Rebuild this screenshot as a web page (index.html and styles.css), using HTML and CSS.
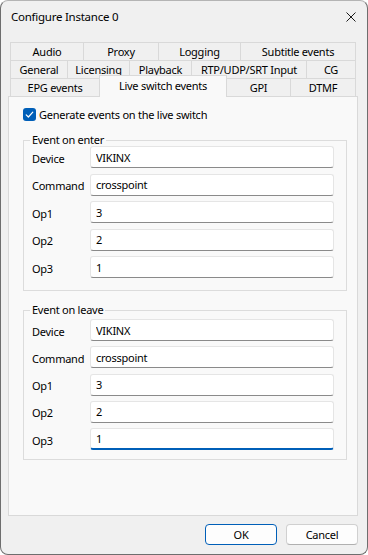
FILE: index.html
```html
<!DOCTYPE html>
<html lang="en">
<head>
  <meta charset="UTF-8" />
  <title>Configure Instance 0</title>
  <link rel="stylesheet" href="styles.css">
</head>
<body>
  <div class="window">
    <div class="titlebar">
      <span class="title">Configure Instance 0</span>
      <svg class="close" width="10" height="10" viewBox="0 0 10 10">
        <path d="M0.5 0.5 L9.5 9.5 M9.5 0.5 L0.5 9.5" stroke="#1a1a1a" stroke-width="1" fill="none" />
      </svg>
    </div>

    <div class="tabs">
      <div class="tab-row row-1">
        <div class="tab">Audio</div>
        <div class="tab">Proxy</div>
        <div class="tab">Logging</div>
        <div class="tab">Subtitle events</div>
      </div>
      <div class="tab-row row-2">
        <div class="tab">General</div>
        <div class="tab">Licensing</div>
        <div class="tab">Playback</div>
        <div class="tab">RTP/UDP/SRT Input</div>
        <div class="tab">CG</div>
      </div>
      <div class="tab-row row-3">
        <div class="tab">EPG events</div>
        <div class="tab active">Live switch events</div>
        <div class="tab">GPI</div>
        <div class="tab">DTMF</div>
      </div>
    </div>

    <div class="panel">
      <label class="check">
        <span class="box">
          <svg width="13" height="13" viewBox="0 0 13 13">
            <path d="M3.2 6.8 L5.4 9 L9.8 4.2" stroke="#fff" stroke-width="1.2" fill="none" stroke-linecap="round" stroke-linejoin="round" />
          </svg>
        </span>
        Generate events on the live switch
      </label>

      <fieldset class="group">
        <legend>Event on enter</legend>
        <div class="row"><span class="lbl">Device</span><input class="field" value="VIKINX"></div>
        <div class="row"><span class="lbl">Command</span><input class="field" value="crosspoint"></div>
        <div class="row"><span class="lbl">Op1</span><input class="field" value="3"></div>
        <div class="row"><span class="lbl">Op2</span><input class="field" value="2"></div>
        <div class="row"><span class="lbl">Op3</span><input class="field" value="1"></div>
      </fieldset>

      <fieldset class="group group-leave">
        <legend>Event on leave</legend>
        <div class="row"><span class="lbl">Device</span><input class="field" value="VIKINX"></div>
        <div class="row"><span class="lbl">Command</span><input class="field" value="crosspoint"></div>
        <div class="row"><span class="lbl">Op1</span><input class="field" value="3"></div>
        <div class="row"><span class="lbl">Op2</span><input class="field" value="2"></div>
        <div class="row"><span class="lbl">Op3</span><input class="field focused" value="1"></div>
      </fieldset>
    </div>

    <div class="buttons">
      <button class="btn default">OK</button>
      <button class="btn">Cancel</button>
    </div>
  </div>
</body>
</html>
```

FILE: styles.css
```css
*, *::before, *::after { box-sizing: border-box; }
html, body { margin: 0; padding: 0; }
body {
  font-family: "Noto Sans", "Open Sans", sans-serif;
  font-size: 11px;
  letter-spacing: -0.25px;
  color: #000;
  background: #fff;
}
.window {
  width: 368px;
  height: 555px;
  background: #f0f0f0;
  border: 1px solid #6e6e6e;
  border-top-color: #b4b4b4;
  border-radius: 8px;
  display: flex;
  flex-direction: column;
  overflow: hidden;
}
.titlebar {
  height: 32px;
  display: flex;
  align-items: center;
  justify-content: space-between;
  padding: 0 11px 1px 10px;
}
.title { font-size: 11.5px; }
.close { display: block; }

.tabs {
  margin: 9px 11px 0 9px;
  display: flex;
  flex-direction: column;
}
.tab-row { display: grid; height: 18px; }
.row-1 { grid-template-columns: 74px 75px 82px 1fr; }
.row-2 { grid-template-columns: 58px 62px 62px 115px 1fr; }
.row-3 { grid-template-columns: 90px 127px 64px 1fr; }
.tab {
  height: 18px;
  line-height: 18px;
  text-align: center;
  white-space: nowrap;
  border: 1px solid #d9d9d9;
  border-bottom: none;
  border-left: none;
  background: #f0f0f0;
}
.tab:first-child { border-left: 1px solid #d9d9d9; }
.tab.active {
  position: relative;
  z-index: 1;
  height: 22px;
  margin-top: -3px;
  margin-left: -1px;
  border-left: 1px solid #d9d9d9;
  line-height: 19px;
  background: #f9f9f9;
}

.panel {
  height: 420px;
  margin: 0 9px 0 7px;
  background: #f9f9f9;
  border: 1px solid #d9d9d9;
  padding: 11px 10px 0 14px;
}
.check {
  display: flex;
  align-items: center;
  height: 13px;
  gap: 3px;
}
.box {
  width: 13px;
  height: 13px;
  border-radius: 3px;
  background: #005fb8;
}
.box svg { display: block; }

.group {
  margin: 13px 0 0;
  padding: 0 12px 12px 8px;
  border: 1px solid #dcdcdc;
  display: flex;
  flex-direction: column;
  gap: 5.5px;
}
.group-leave {
  padding-top: 3px;
  padding-bottom: 9px;
  gap: 5.25px;
}
.group legend {
  line-height: 12px;
  padding: 0 2px;
  margin-left: -2px;
}
.row {
  display: flex;
  align-items: center;
  height: 22px;
}
.lbl { width: 58px; padding-top: 2px; }
.field {
  flex: 1;
  height: 22px;
  font: inherit;
  letter-spacing: inherit;
  color: #000;
  background: #fff;
  border: 1px solid #e5e5e5;
  border-bottom-color: #8a8a8a;
  border-radius: 3px;
  padding: 0 5px;
  outline: none;
}
.field.focused {
  border-bottom: 2px solid #005fb8;
}

.buttons {
  display: flex;
  justify-content: flex-end;
  gap: 9px;
  margin: 8px 9px 0 0;
}
.btn {
  width: 72px;
  height: 21px;
  font: inherit;
  letter-spacing: inherit;
  color: #000;
  background: #fdfdfd;
  border: 1px solid #d0d0d0;
  border-bottom-color: #b0b0b0;
  border-radius: 4px;
  padding: 0;
}
.btn.default { border: 1px solid #005fb8; }
```
